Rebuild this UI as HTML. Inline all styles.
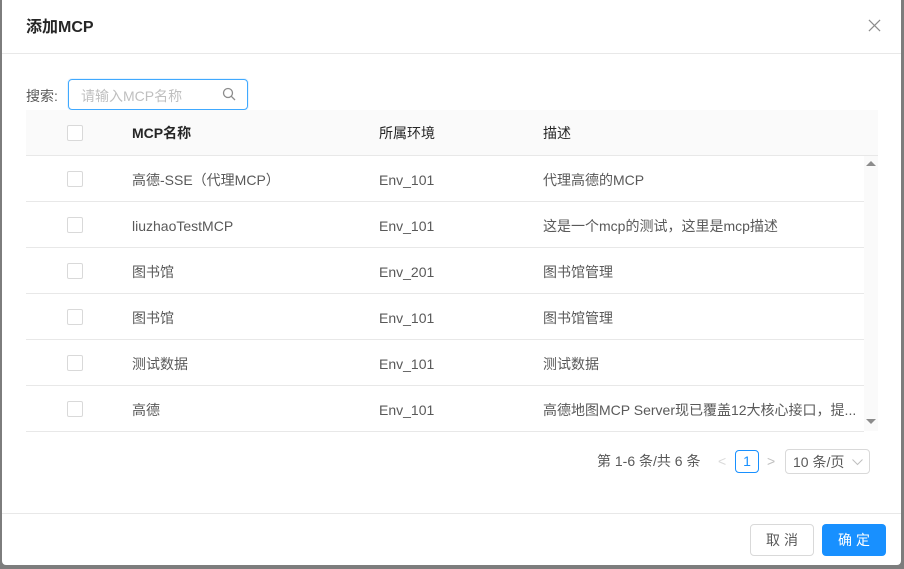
<!DOCTYPE html>
<html><head><meta charset="utf-8"><style>
*{box-sizing:border-box;margin:0;padding:0}
body{width:904px;height:569px;background:#7d7d7d;font-family:"Liberation Sans","Noto Sans CJK SC",sans-serif;font-size:14px;line-height:20px;color:#595959;position:relative;overflow:hidden}
.m{position:absolute;left:2px;top:0;width:899px;height:565px;background:#fff;border-radius:0 0 4px 4px}
.t{position:absolute;left:24px;top:17px;font-size:16px;line-height:22px;color:#262626;font-weight:bold}
.x{position:absolute;right:20px;top:19px}
.hl{position:absolute;left:0;right:0;height:1px;background:#e8e8e8}
.abs{position:absolute}
.cb{position:absolute;left:65px;width:16px;height:16px;border:1px solid #d9d9d9;border-radius:2px;background:#fff}
.row{position:absolute;left:24px;width:838px;height:46px;border-bottom:1px solid #e8e8e8}
.row span{position:absolute;top:14px;white-space:nowrap;line-height:20px;display:flex;align-items:center;height:20px}
</style></head><body>
<div class="m">
<div class="t">添加MCP</div>
<svg class="x" width="13" height="13" viewBox="0 0 14 14"><path d="M1 1L13 13M13 1L1 13" stroke="#8c8c8c" stroke-width="1.3"/></svg>
<div class="hl" style="top:53px"></div>
<div class="abs" style="left:24px;top:86px;color:#595959">搜索:</div>
<div class="abs" style="left:66px;top:79px;width:180px;height:31px;border:1px solid #40a9ff;border-radius:4px;box-shadow:0 0 0 1px rgba(24,144,255,0.1)">
<span class="abs" style="left:12px;top:6px;color:#bfbfbf">请输入MCP名称</span>
<svg class="abs" style="left:153px;top:7px" width="14" height="14" viewBox="0 0 14 14"><circle cx="6" cy="6" r="4.5" fill="none" stroke="#8c8c8c" stroke-width="1.3"/><path d="M9.3 9.3L13 13" stroke="#8c8c8c" stroke-width="1.3"/></svg>
</div>
<div class="abs" style="left:24px;top:110px;width:852px;height:46px;background:#fafafa;border-bottom:1px solid #e8e8e8"></div>
<div class="cb" style="top:125px"></div>
<div class="abs" style="left:130px;top:123px;color:#262626;font-weight:bold">MCP名称</div>
<div class="abs" style="left:377px;top:123px;color:#262626">所属环境</div>
<div class="abs" style="left:541px;top:123px;color:#262626">描述</div>
<div class="abs" style="left:862px;top:156px;width:14px;height:275px;background:#fafafa"></div>
<svg class="abs" style="left:864px;top:160px" width="10" height="6"><path d="M0 6L5 1L10 6Z" fill="#8c8c8c"/></svg>
<svg class="abs" style="left:864px;top:419px" width="10" height="6"><path d="M0 0L10 0L5 5Z" fill="#8c8c8c"/></svg>

<div class="row" style="top:156px"><span style="left:106px">高德-SSE（代理MCP）</span><span style="left:353px">Env_101</span><span style="left:517px">代理高德的MCP</span></div>
<div class="cb" style="top:171px"></div>
<div class="row" style="top:202px"><span style="left:106px">liuzhaoTestMCP</span><span style="left:353px">Env_101</span><span style="left:517px">这是一个mcp的测试，这里是mcp描述</span></div>
<div class="cb" style="top:217px"></div>
<div class="row" style="top:248px"><span style="left:106px">图书馆</span><span style="left:353px">Env_201</span><span style="left:517px">图书馆管理</span></div>
<div class="cb" style="top:263px"></div>
<div class="row" style="top:294px"><span style="left:106px">图书馆</span><span style="left:353px">Env_101</span><span style="left:517px">图书馆管理</span></div>
<div class="cb" style="top:309px"></div>
<div class="row" style="top:340px"><span style="left:106px">测试数据</span><span style="left:353px">Env_101</span><span style="left:517px">测试数据</span></div>
<div class="cb" style="top:355px"></div>
<div class="row" style="top:386px"><span style="left:106px">高德</span><span style="left:353px">Env_101</span><span style="left:517px">高德地图MCP Server现已覆盖12大核心接口，提...</span></div>
<div class="cb" style="top:401px"></div>

<div class="abs" style="left:595px;top:451px">第 1-6 条/共 6 条</div>
<div class="abs" style="left:716px;top:451px;color:#d9d9d9">&lt;</div>
<div class="abs" style="left:733px;top:450px;width:24px;height:23px;border:1px solid #1890ff;border-radius:4px;color:#1890ff;text-align:center;line-height:21px">1</div>
<div class="abs" style="left:765px;top:451px;color:#bfbfbf">&gt;</div>
<div class="abs" style="left:783px;top:449px;width:85px;height:25px;border:1px solid #d9d9d9;border-radius:4px"><span class="abs" style="left:7px;top:2px">10 条/页</span>
<svg class="abs" style="left:66px;top:9px" width="11" height="7"><path d="M0.5 0.5L5.5 5.5L10.5 0.5" fill="none" stroke="#bfbfbf"/></svg></div>

<div class="hl" style="top:513px"></div>
<div class="abs" style="left:748px;top:524px;width:64px;height:32px;border:1px solid #d9d9d9;border-radius:4px;text-align:center;line-height:30px;color:#595959;letter-spacing:4px;text-indent:4px">取消</div>
<div class="abs" style="left:820px;top:524px;width:64px;height:32px;background:#1890ff;border-radius:4px;text-align:center;line-height:32px;color:#fff;letter-spacing:4px;text-indent:4px">确定</div>
</div>
</body></html>
